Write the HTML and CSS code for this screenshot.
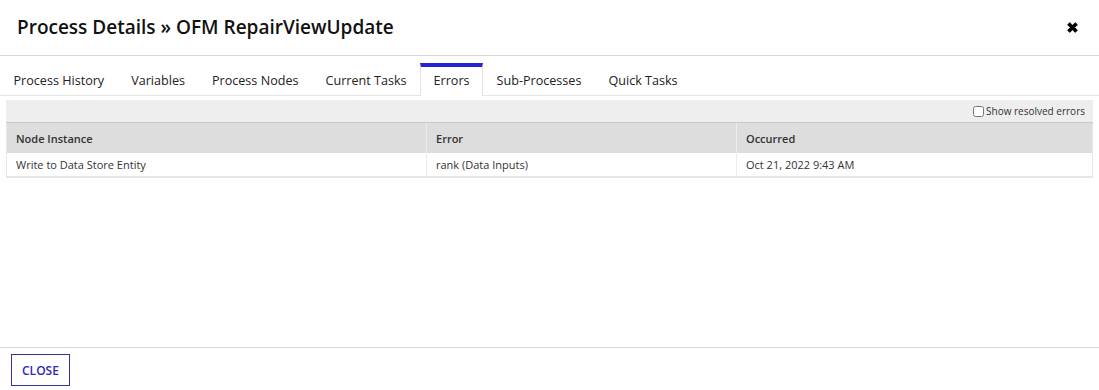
FILE: index.html
```html
<!DOCTYPE html>
<html lang="en">
<head>
  <meta charset="UTF-8" />
  <title>Process Details</title>
  <link rel="stylesheet" href="styles.css">
</head>
<body>
  <div class="dialog">
    <div class="dialog-head">
      <h1>Process Details &raquo; OFM RepairViewUpdate</h1>
      <button class="close-x" aria-label="Close">
        <svg width="13" height="13" viewBox="0 0 12 12">
          <path d="M1.5 3.5 L3.5 1.5 L6 4 L8.5 1.5 L10.5 3.5 L8 6 L10.5 8.5 L8.5 10.5 L6 8 L3.5 10.5 L1.5 8.5 L4 6 Z" fill="#000" stroke="#000" stroke-width="0.8" stroke-linejoin="round"/>
        </svg>
      </button>
    </div>

    <ul class="tabs">
      <li>Process History</li>
      <li>Variables</li>
      <li>Process Nodes</li>
      <li>Current Tasks</li>
      <li class="active">Errors</li>
      <li>Sub-Processes</li>
      <li>Quick Tasks</li>
    </ul>

    <div class="dialog-body">
      <div class="toolbar">
        <label><input type="checkbox" /> Show resolved errors</label>
      </div>
      <table class="grid">
        <colgroup>
          <col style="width:420px">
          <col style="width:310px">
          <col>
        </colgroup>
        <thead>
          <tr><th>Node Instance</th><th>Error</th><th>Occurred</th></tr>
        </thead>
        <tbody>
          <tr><td>Write to Data Store Entity</td><td>rank (Data Inputs)</td><td>Oct 21, 2022 9:43 AM</td></tr>
        </tbody>
      </table>
    </div>

    <div class="dialog-foot">
      <button class="btn">CLOSE</button>
    </div>
  </div>
</body>
</html>
```

FILE: styles.css
```css
html, body { margin: 0; height: 100%; }
body {
  background: #fff; color: #222;
  font-family: "Open Sans", "Noto Sans", sans-serif;
}
.dialog { display: flex; flex-direction: column; height: 390px; }

.dialog-head {
  height: 56px; box-sizing: border-box;
  display: flex; align-items: center; justify-content: space-between;
  padding: 0 20px 0 17px;
  border-bottom: 1px solid #d6d6d6;
}
.dialog-head h1 { margin: 0 0 2px; font-size: 19px; font-weight: 600; color: #111; }
.close-x { background: none; border: 0; padding: 0; cursor: pointer; display: flex; margin-top: 0; }

.tabs {
  list-style: none; margin: 7px 0 0; padding: 0;
  display: flex; border-bottom: 1px solid #e4e4e4;
}
.tabs li {
  height: 32px; line-height: 34px; box-sizing: border-box;
  padding: 0 12.5px; font-size: 12.6px; color: #222;
  border: 1px solid transparent; border-bottom: 0;
}
.tabs li.active {
  border-color: #e2e2e2;
  border-top: 4px solid #2424d6;
  line-height: 28px;
  background: #fff;
  margin-bottom: -1px; height: 33px;
}

.dialog-body { flex: 1; padding: 4px 6px 0; }
.toolbar {
  background: #eeeeee; height: 23px; box-sizing: border-box;
  border-bottom: 1px solid #c8c8c8;
  display: flex; justify-content: flex-end; align-items: center;
  padding-right: 8px;
}
.toolbar label { font-size: 10px; color: #333; display: flex; align-items: center; }
.toolbar input { margin: 0 2px 0 0; width: 11px; height: 11px; }

.grid {
  width: 100%; border-collapse: collapse; table-layout: fixed;
  border: 1px solid #e6e6e6; border-top: 0;
  border-bottom: 2px solid #e6e6e6;
}
.grid th {
  background: #dddddd; text-align: left;
  font-size: 11px; font-weight: 600; color: #333;
  height: 30px; padding: 0 9px;
  border-left: 1px solid #ededed;
}
.grid td {
  font-size: 11px; color: #333; height: 23px; padding: 0 9px;
  border-left: 1px solid #ededed;
}
.grid th:first-child, .grid td:first-child { border-left: 0; }

.dialog-foot {
  border-top: 1px solid #d6d6d6;
  padding: 6px 11px 4px;
}
.btn {
  font-family: inherit; font-size: 12px; font-weight: 600;
  color: #2b2bb8; background: #fff;
  border: 1px solid #33339e; height: 32px; padding: 0 10px;
}
```
